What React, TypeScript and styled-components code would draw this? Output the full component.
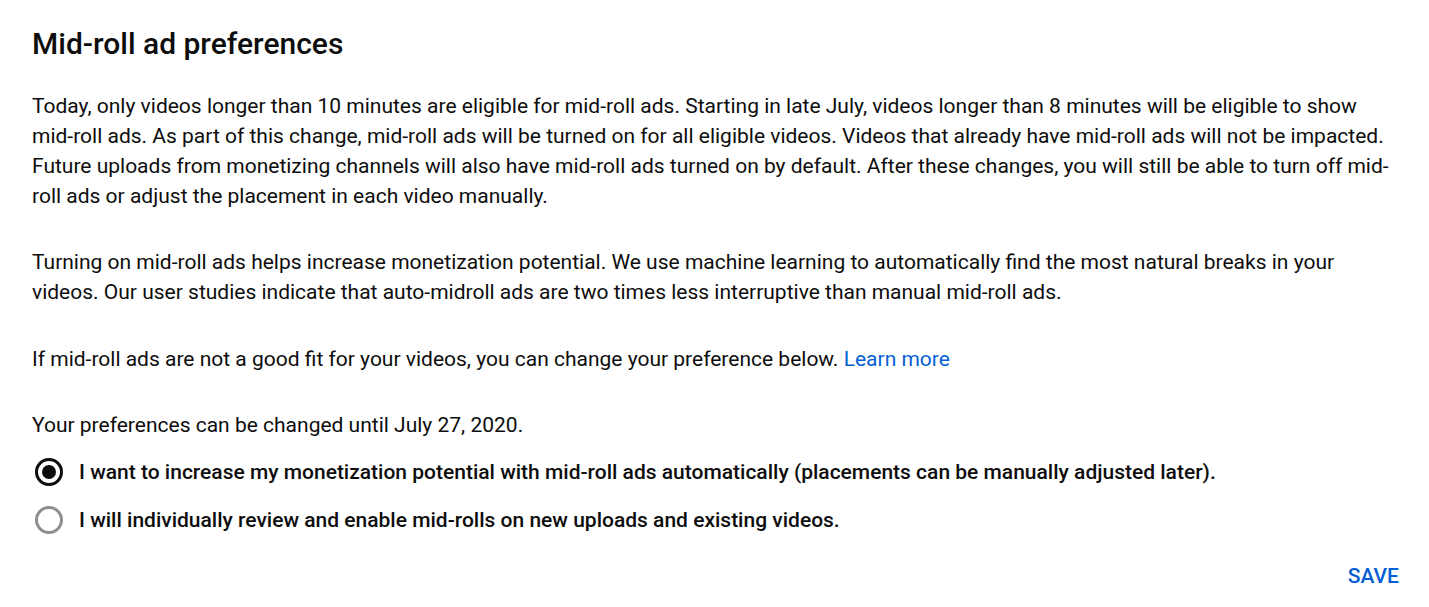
import * as React from "react";
import styled, { createGlobalStyle } from "styled-components";

const GlobalStyle = createGlobalStyle`
  html, body {
    margin: 0;
    padding: 0;
    background: #ffffff;
  }
  body {
    font-family: Roboto, "Noto Sans", Arial, sans-serif;
    color: #0d0d0d;
  }
`;

const Panel = styled.section`
  padding: 25px 30px 0 32px;
`;

const Title = styled.h1`
  margin: 0;
  font-size: 30px;
  line-height: 38px;
  font-weight: 500;
  color: #0d0d0d;
`;

const Body = styled.div`
  margin-top: 28px;
  display: flex;
  flex-direction: column;
  gap: 36.3px;
`;

const Para = styled.p`
  margin: 0;
  font-size: 21px;
  line-height: 30px;
  font-weight: 400;
`;

const Link = styled.a`
  color: #065fd4;
  text-decoration: none;
  cursor: pointer;
`;

const Options = styled.div`
  margin-top: 8px;
  display: flex;
  flex-direction: column;
`;

const Option = styled.label`
  display: flex;
  align-items: center;
  gap: 16px;
  height: 48px;
  cursor: pointer;
`;

const RadioRing = styled.span<{ checked: boolean }>`
  flex: none;
  box-sizing: border-box;
  width: 28px;
  height: 28px;
  margin-left: 3px;
  border-radius: 50%;
  border: 3px solid ${(p) => (p.checked ? "#0d0d0d" : "#8f8f8f")};
  display: flex;
  align-items: center;
  justify-content: center;

  &::after {
    content: "";
    width: 14px;
    height: 14px;
    border-radius: 50%;
    background: #0d0d0d;
    display: ${(p) => (p.checked ? "block" : "none")};
  }
`;

const OptionText = styled.span`
  font-size: 21px;
  font-weight: 500;
  line-height: 28px;
`;

const Footer = styled.div`
  display: flex;
  justify-content: flex-end;
  margin-top: 19px;
`;

const SaveButton = styled.button`
  background: none;
  border: none;
  padding: 0;
  font-family: inherit;
  font-size: 21px;
  font-weight: 500;
  line-height: 26px;
  color: #065fd4;
  text-transform: uppercase;
  cursor: pointer;
`;

const options = [
  "I want to increase my monetization potential with mid-roll ads automatically (placements can be manually adjusted later).",
  "I will individually review and enable mid-rolls on new uploads and existing videos.",
];

export default function App() {
  const [choice, setChoice] = React.useState(0);

  return (
    <>
      <GlobalStyle />
      <Panel>
        <Title>Mid-roll ad preferences</Title>
        <Body>
          <Para>
            Today, only videos longer than 10 minutes are eligible for mid-roll ads. Starting in late July,
            videos longer than 8 minutes will be eligible to show mid-roll ads. As part of this change,
            mid-roll ads will be turned on for all eligible videos. Videos that already have mid-roll ads
            will not be impacted. Future uploads from monetizing channels will also have mid-roll ads turned
            on by default. After these changes, you will still be able to turn off mid-roll ads or adjust the
            placement in each video manually.
          </Para>
          <Para>
            Turning on mid-roll ads helps increase monetization potential. We use machine learning to
            automatically find the most natural breaks in your videos. Our user studies indicate that
            auto-midroll ads are two times less interruptive than manual mid-roll ads.
          </Para>
          <Para>
            If mid-roll ads are not a good fit for your videos, you can change your preference below.{" "}
            <Link>Learn more</Link>
          </Para>
          <Para>Your preferences can be changed until July 27, 2020.</Para>
        </Body>
        <Options>
          {options.map((text, i) => (
            <Option key={i} onClick={() => setChoice(i)}>
              <RadioRing checked={choice === i} />
              <OptionText>{text}</OptionText>
            </Option>
          ))}
        </Options>
        <Footer>
          <SaveButton>Save</SaveButton>
        </Footer>
      </Panel>
    </>
  );
}
